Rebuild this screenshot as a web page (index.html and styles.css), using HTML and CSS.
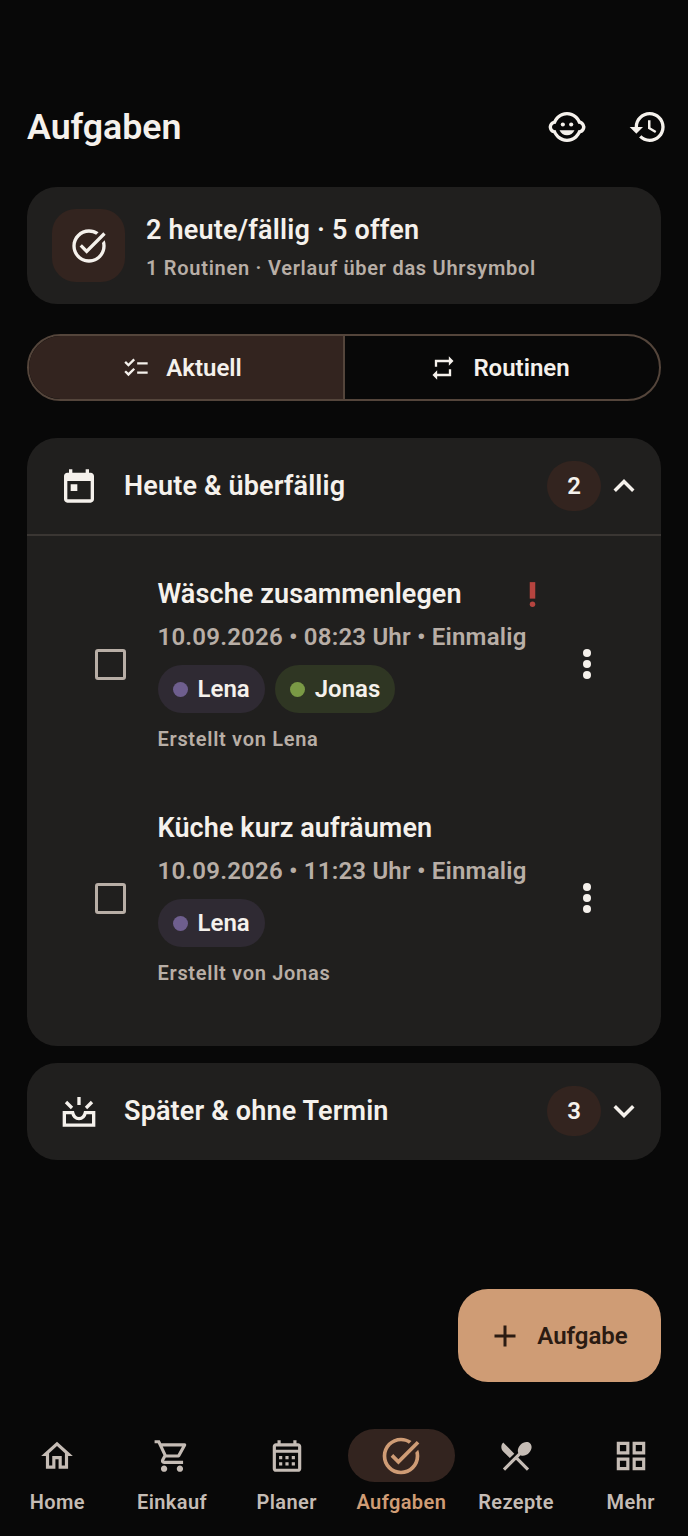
FILE: index.html
```html
<!DOCTYPE html>
<html lang="de">
<head>
    <meta charset="UTF-8">
    <meta name="viewport" content="width=device-width, initial-scale=1.0">
    <title>Aufgaben</title>
    <link rel="stylesheet" href="styles.css">
</head>
<body>
    <main class="page">
        <header class="topbar">
            <h1>Aufgaben</h1>
            <div class="topbar-actions">
                <svg class="icon-top" viewBox="0 0 24 24"><circle cx="14.5" cy="10.5" r="1.25"/><circle cx="9.5" cy="10.5" r="1.25"/><path d="M12 17c2 0 3.7-1.2 4.5-3h-9c.8 1.8 2.5 3 4.5 3z"/><path d="M22.9 11.3c-.3-1.5-1.4-2.7-2.8-3.2-.5-1.1-1.3-2.1-2.2-2.9C16.4 3.9 14.3 3 12 3s-4.4.9-5.9 2.3c-.9.8-1.7 1.8-2.2 2.9-1.5.4-2.6 1.6-2.8 3.1-.1.2-.1.5-.1.7s0 .5.1.7c.2 1.5 1.3 2.7 2.8 3.1.5 1.1 1.3 2.1 2.2 2.9 1.5 1.4 3.6 2.3 5.9 2.3s4.4-.9 6-2.3c.9-.8 1.6-1.8 2.2-2.9 1.4-.4 2.5-1.6 2.8-3.1 0-.2.1-.5.1-.7s-.1-.5-.2-.7zM19 14h-.3c-.2.7-.5 1.3-.9 1.8-1.2 2-3.3 3.2-5.8 3.2s-4.6-1.3-5.9-3.2c-.4-.5-.6-1.1-.8-1.8H5c-1.1 0-2-.9-2-2s.9-2 2-2h.3c.2-.7.4-1.3.8-1.8C7.4 6.3 9.5 5 12 5s4.6 1.3 5.9 3.2c.3.5.6 1.1.8 1.8h.3c1.1 0 2 .9 2 2s-.9 2-2 2z"/></svg>
                <svg class="icon-top" viewBox="0 0 24 24"><path d="M13 3c-4.97 0-9 4.03-9 9H1l3.89 3.89.07.14L9 12H6c0-3.87 3.13-7 7-7s7 3.13 7 7-3.13 7-7 7c-1.93 0-3.68-.79-4.94-2.06l-1.42 1.42C8.27 19.99 10.51 21 13 21c4.97 0 9-4.03 9-9s-4.03-9-9-9zm-1 5v5l4.28 2.54.72-1.21-3.5-2.08V8H12z"/></svg>
            </div>
        </header>

        <section class="summary">
            <div class="summary-icon">
                <svg viewBox="0 0 24 24"><path d="M22 5.18 10.59 16.6l-4.24-4.24 1.41-1.41 2.83 2.83 10-10L22 5.18zm-2.21 5.04c.13.57.21 1.17.21 1.78 0 4.42-3.58 8-8 8s-8-3.58-8-8 3.58-8 8-8c1.58 0 3.04.46 4.28 1.25l1.44-1.44C16.1 2.67 14.13 2 12 2 6.48 2 2 6.48 2 12s4.48 10 10 10 10-4.48 10-10c0-1.19-.22-2.33-.6-3.39l-1.61 1.61z"/></svg>
            </div>
            <div>
                <div class="summary-title">2 heute/fällig · 5 offen</div>
                <div class="summary-sub">1 Routinen · Verlauf über das Uhrsymbol</div>
            </div>
        </section>

        <div class="tabs">
            <div class="tab active">
                <svg viewBox="0 0 24 24"><path d="M22 7h-9v2h9V7zm0 8h-9v2h9v-2zM5.54 11 2 7.46l1.41-1.41 2.12 2.12 4.24-4.24 1.41 1.41L5.54 11zm0 8L2 15.46l1.41-1.41 2.12 2.12 4.24-4.24 1.41 1.41L5.54 19z"/></svg>
                Aktuell
            </div>
            <div class="tab">
                <svg viewBox="0 0 24 24"><path d="M7 7h10v3l4-4-4-4v3H5v6h2V7zm10 10H7v-3l-4 4 4 4v-3h12v-6h-2v4z"/></svg>
                Routinen
            </div>
        </div>

        <section class="group">
            <div class="group-head open">
                <svg class="group-icon" viewBox="0 0 24 24"><path d="M19 4h-1V2h-2v2H8V2H6v2H5c-1.11 0-1.99.9-1.99 2L3 20c0 1.1.89 2 2 2h14c1.1 0 2-.9 2-2V6c0-1.1-.9-2-2-2zm0 16H5V9h14v11zM7 11h4v4H7z"/></svg>
                <span class="group-title">Heute &amp; überfällig</span>
                <span class="badge">2</span>
                <svg class="chevron" viewBox="0 0 24 24"><path d="M7.41 15.41 12 10.83l4.59 4.58L18 14l-6-6-6 6z"/></svg>
            </div>
            <div class="tasks">
                <article class="task">
                    <div class="check"><span class="box"></span></div>
                    <div class="task-body">
                        <div class="task-title">
                            <span>Wäsche zusammenlegen</span>
                            <svg class="prio" viewBox="0 0 24 24"><circle cx="12" cy="19" r="2"/><path d="M10 3h4v12h-4z"/></svg>
                        </div>
                        <div class="task-meta">10.09.2026 • 08:23 Uhr • Einmalig</div>
                        <div class="chips">
                            <span class="chip chip-lena"><i class="dot"></i>Lena</span>
                            <span class="chip chip-jonas"><i class="dot"></i>Jonas</span>
                        </div>
                        <div class="task-by">Erstellt von Lena</div>
                    </div>
                    <svg class="more" viewBox="0 0 24 24"><circle cx="12" cy="6.5" r="2"/><circle cx="12" cy="12" r="2"/><circle cx="12" cy="17.5" r="2"/></svg>
                </article>
                <article class="task">
                    <div class="check"><span class="box"></span></div>
                    <div class="task-body">
                        <div class="task-title"><span>Küche kurz aufräumen</span></div>
                        <div class="task-meta">10.09.2026 • 11:23 Uhr • Einmalig</div>
                        <div class="chips">
                            <span class="chip chip-lena"><i class="dot"></i>Lena</span>
                        </div>
                        <div class="task-by">Erstellt von Jonas</div>
                    </div>
                    <svg class="more" viewBox="0 0 24 24"><circle cx="12" cy="6.5" r="2"/><circle cx="12" cy="12" r="2"/><circle cx="12" cy="17.5" r="2"/></svg>
                </article>
            </div>
        </section>

        <section class="group group-closed">
            <div class="group-head">
                <svg class="group-icon" viewBox="0 0 24 24"><path class="tray" d="M3.2 13h5c.5 2.200 2 3.600 3.800 3.600s3.300-1.400 3.800-3.600h5v7.500H3.200z"/><path class="tray" d="M12 3.600v4.800M4.200 6.600l3.600 3.600M19.800 6.600l-3.600 3.600"/></svg>
                <span class="group-title">Später &amp; ohne Termin</span>
                <span class="badge">3</span>
                <svg class="chevron" viewBox="0 0 24 24"><path d="M16.59 8.59 12 13.17 7.41 8.59 6 10l6 6 6-6z"/></svg>
            </div>
        </section>

        <button class="fab" type="button">
            <svg viewBox="0 0 24 24"><path d="M19 13h-6v6h-2v-6H5v-2h6V5h2v6h6v2z"/></svg>
            Aufgabe
        </button>
    </main>

    <nav class="bottom-nav">
        <a class="nav-item">
            <span class="nav-icon"><svg viewBox="0 0 24 24"><path d="M12 5.690l5 4.500V18h-2v-6H9v6H7v-7.810l5-4.500M12 3 2 12h3v8h6v-6h2v6h6v-8h3L12 3z"/></svg></span>
            Home
        </a>
        <a class="nav-item">
            <span class="nav-icon"><svg viewBox="0 0 24 24"><path d="M15.55 13c.75 0 1.41-.41 1.75-1.03l3.58-6.49c.37-.66-.11-1.48-.87-1.480H5.210l-.94-2H1v2h2l3.600 7.590-1.350 2.440C4.520 15.370 5.480 17 7 17h12v-2H7l1.100-2h7.450zM6.160 6h12.150l-2.760 5H8.530L6.160 6zM7 18c-1.100 0-1.990.9-1.990 2S5.900 22 7 22s2-.9 2-2-.9-2-2-2zm10 0c-1.100 0-1.990.9-1.990 2s.89 2 1.990 2 2-.9 2-2-.9-2-2-2z"/></svg></span>
            Einkauf
        </a>
        <a class="nav-item">
            <span class="nav-icon"><svg viewBox="0 0 24 24"><path d="M19 4h-1V2h-2v2H8V2H6v2H5c-1.100 0-2 .9-2 2v14c0 1.100.9 2 2 2h14c1.100 0 2-.9 2-2V6c0-1.100-.9-2-2-2zm0 16H5V10h14v10zm0-12H5V6h14v2zM9 14H7v-2h2v2zm4 0h-2v-2h2v2zm4 0h-2v-2h2v2zm-8 4H7v-2h2v2zm4 0h-2v-2h2v2zm4 0h-2v-2h2v2z"/></svg></span>
            Planer
        </a>
        <a class="nav-item active">
            <span class="nav-icon"><svg viewBox="0 0 24 24"><path d="M22 5.18 10.59 16.6l-4.24-4.24 1.41-1.41 2.83 2.83 10-10L22 5.18zm-2.21 5.04c.13.57.21 1.17.21 1.78 0 4.42-3.58 8-8 8s-8-3.58-8-8 3.58-8 8-8c1.58 0 3.04.46 4.28 1.25l1.44-1.44C16.1 2.67 14.13 2 12 2 6.48 2 2 6.48 2 12s4.48 10 10 10 10-4.48 10-10c0-1.19-.22-2.33-.6-3.39l-1.61 1.61z"/></svg></span>
            Aufgaben
        </a>
        <a class="nav-item">
            <span class="nav-icon"><svg viewBox="0 0 24 24"><path d="M8.100 13.340l2.830-2.830L3.910 3.500c-1.560 1.560-1.560 4.090 0 5.660l4.190 4.180zm6.780-1.810c1.530.71 3.680.21 5.270-1.380 1.910-1.910 2.280-4.650.81-6.120-1.460-1.460-4.200-1.100-6.120.81-1.590 1.590-2.090 3.740-1.380 5.270L3.700 19.870l1.410 1.410L12 14.410l6.880 6.880 1.410-1.410L13.410 13l1.470-1.470z"/></svg></span>
            Rezepte
        </a>
        <a class="nav-item">
            <span class="nav-icon"><svg viewBox="0 0 24 24"><path d="M3 3v8h8V3H3zm6 6H5V5h4v4zm-6 4v8h8v-8H3zm6 6H5v-4h4v4zm4-16v8h8V3h-8zm6 6h-4V5h4v4zm-6 4v8h8v-8h-8zm6 6h-4v-4h4v4z"/></svg></span>
            Mehr
        </a>
    </nav>
</body>
</html>
```

FILE: styles.css
```css
* {
    box-sizing: border-box;
}
body {
    font-family: Roboto, 'Liberation Sans', sans-serif;
    color: #f5f1ec;
    background-color: #080808;
    margin: 0;
    height: 1536px;
    overflow: hidden;
    display: flex;
    flex-direction: column;
}
svg {
    fill: currentColor;
    display: block;
    flex-shrink: 0;
}
.page {
    position: relative;
    flex-grow: 1;
    padding: 100px 27px 0;
}
.topbar {
    display: flex;
    align-items: center;
    justify-content: space-between;
    height: 54px;
}
h1 {
    margin: 0;
    font-size: 35.7px;
    font-weight: 600;
}
.topbar-actions {
    display: flex;
    gap: 41px;
    margin-right: -7px;
}
.icon-top {
    width: 40px;
    height: 40px;
}
.summary {
    margin-top: 33px;
    height: 117px;
    background-color: #201f1e;
    border-radius: 30px;
    padding: 0 25px;
    display: flex;
    align-items: center;
    gap: 21px;
}
.summary-icon {
    width: 73px;
    height: 73px;
    border-radius: 24px;
    background-color: #33241f;
    display: flex;
    align-items: center;
    justify-content: center;
}
.summary-icon svg {
    width: 40px;
    height: 40px;
}
.summary-title {
    font-size: 27px;
    font-weight: 600;
    letter-spacing: 0.2px;
    line-height: 36px;
    margin-top: 2px;
}
.summary-sub {
    font-size: 20px;
    font-weight: 600;
    letter-spacing: 0.73px;
    line-height: 28px;
    margin-top: 6px;
    color: #b8aea6;
}
.tabs {
    margin-top: 30px;
    height: 67px;
    display: flex;
    border: 2px solid #54453b;
    border-radius: 34px;
    overflow: hidden;
}
.tab {
    width: 314px;
    display: flex;
    align-items: center;
    justify-content: center;
    gap: 16px;
    padding-right: 5px;
    font-size: 24px;
    font-weight: 600;
}
.tab svg {
    width: 28px;
    height: 28px;
}
.tab.active {
    width: 316px;
    background-color: #33241f;
    border-right: 2px solid #54453b;
    padding-right: 8px;
}
.group {
    margin-top: 37px;
    background-color: #201f1e;
    border-radius: 30px;
}
.group-closed {
    margin-top: 17px;
}
.group-head {
    height: 97px;
    display: flex;
    align-items: center;
    padding: 0 16px 1px 32px;
}
.group-head.open {
    height: 98px;
    padding-bottom: 0;
    border-bottom: 2px solid #3a3633;
}
.group-icon {
    width: 40px;
    height: 40px;
}
.tray {
    fill: none;
    stroke: currentColor;
    stroke-width: 2;
}
.group-title {
    flex: 1;
    margin-left: 25px;
    font-size: 27px;
    font-weight: 600;
    letter-spacing: 0.15px;
}
.badge {
    width: 54px;
    height: 50px;
    border-radius: 25px;
    background-color: #33241f;
    display: flex;
    align-items: center;
    justify-content: center;
    font-size: 24px;
    font-weight: 600;
}
.chevron {
    width: 42px;
    height: 42px;
    margin-left: 2px;
}
.tasks {
    padding: 11px 50px 31px 59px;
}
.task {
    display: flex;
    align-items: center;
    height: 234px;
}
.check {
    width: 48px;
    height: 48px;
    display: flex;
    align-items: center;
    justify-content: center;
}
.box {
    width: 31px;
    height: 31px;
    border: 3px solid #b8aea6;
    border-radius: 3px;
}
.task-body {
    flex: 1;
    margin: 1px 0 0 23.5px;
}
.task-title {
    display: flex;
    align-items: center;
    justify-content: space-between;
    height: 36px;
    font-size: 27px;
    font-weight: 600;
    letter-spacing: 0.1px;
}
.prio {
    width: 33px;
    height: 33px;
    color: #b5443f;
}
.task-meta {
    margin-top: 9px;
    font-size: 24px;
    font-weight: 600;
    letter-spacing: 0.2px;
    line-height: 32px;
    color: #b8aea6;
}
.chips {
    display: flex;
    gap: 10px;
    margin-top: 12px;
}
.chip {
    height: 48px;
    border-radius: 24px;
    padding: 0 15px;
    display: flex;
    align-items: center;
    gap: 10px;
    font-size: 24px;
    font-weight: 600;
}
.dot {
    width: 15px;
    height: 15px;
    border-radius: 50%;
}
.chip-lena {
    background-color: #2f2a33;
}
.chip-lena .dot {
    background-color: #6e5e8e;
}
.chip-jonas {
    background-color: #2f3623;
}
.chip-jonas .dot {
    background-color: #7a9a45;
}
.task-by {
    margin-top: 12px;
    font-size: 20px;
    font-weight: 600;
    letter-spacing: 0.7px;
    line-height: 28px;
    color: #b8aea6;
}
.more {
    width: 48px;
    height: 48px;
    margin-left: 14px;
}
.fab {
    position: absolute;
    right: 27px;
    top: 1289px;
    width: 203px;
    height: 93px;
    border: none;
    border-radius: 30px;
    padding: 0 4px 0 0;
    background-color: #cf9c75;
    color: #2b1b12;
    display: flex;
    align-items: center;
    justify-content: center;
    gap: 14px;
    font-family: inherit;
    font-size: 24px;
    font-weight: 600;
}
.fab svg {
    width: 36px;
    height: 36px;
}
.bottom-nav {
    height: 126px;
    padding-top: 19px;
    display: flex;
}
.nav-item {
    flex: 1;
    display: flex;
    flex-direction: column;
    align-items: center;
    gap: 8px;
    font-size: 20px;
    font-weight: 600;
    letter-spacing: 0.4px;
    color: #c5bcb5;
    white-space: nowrap;
}
.nav-icon {
    width: 107px;
    height: 53px;
    border-radius: 27px;
    display: flex;
    align-items: center;
    justify-content: center;
}
.nav-icon svg {
    width: 38px;
    height: 38px;
}
.nav-item.active {
    color: #cf9c75;
}
.nav-item.active .nav-icon {
    background-color: #33241f;
}
.nav-item.active .nav-icon svg {
    width: 44px;
    height: 44px;
}
```
